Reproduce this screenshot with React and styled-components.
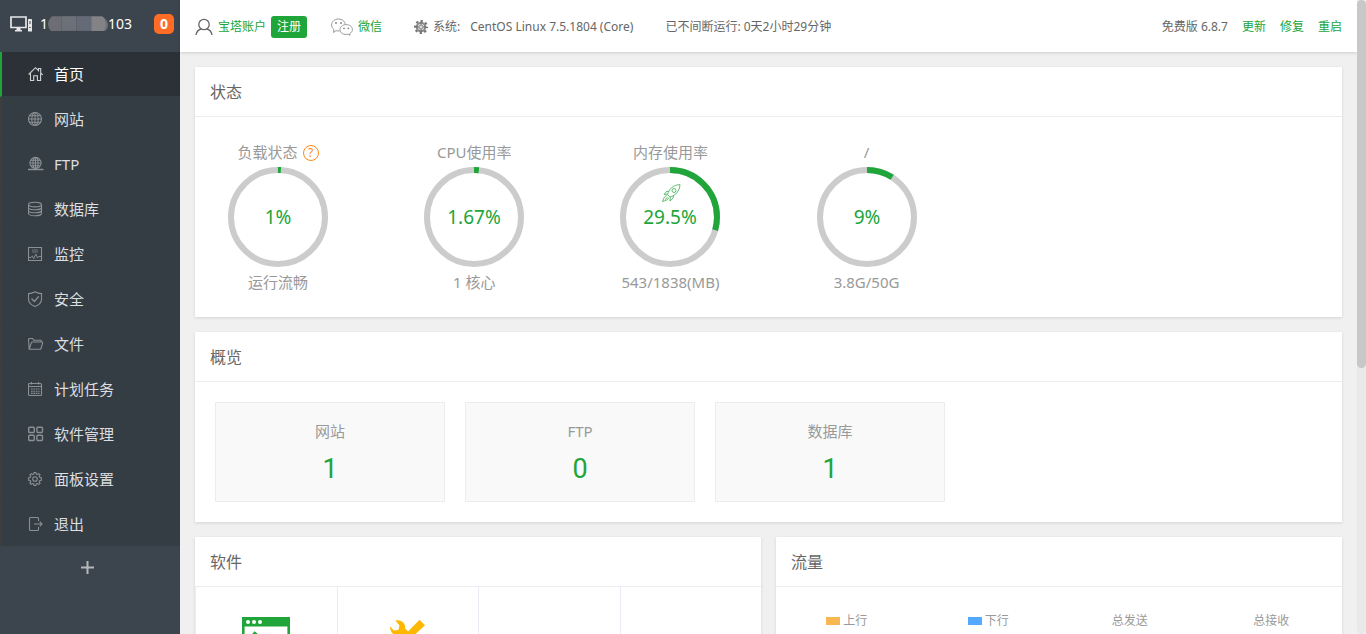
import React from "react";
import styled, { createGlobalStyle } from "styled-components";

const GlobalStyle = createGlobalStyle`
  * {
    box-sizing: border-box;
  }
  body {
    margin: 0;
    background: #f0f0f0;
    color: #666;
    font-family: "Noto Sans", "Noto Sans CJK SC", sans-serif;
    font-size: 12px;
    line-height: 20px;
  }
  a {
    color: #20a53a;
    text-decoration: none;
  }
  button {
    border: 0;
    padding: 0;
    background: none;
    font-family: inherit;
    cursor: pointer;
  }
  h2, h3, p, ul {
    margin: 0;
    padding: 0;
    font-weight: normal;
  }
  svg {
    display: block;
    flex: none;
  }
`;

const Shell = styled.div`
  display: flex;
  height: 100vh;
  overflow: hidden;
`;

const Sidebar = styled.aside`
  flex: none;
  width: 180px;
  background: #3c444d;
`;

const Server = styled.div`
  display: flex;
  align-items: center;
  height: 52px;
  padding: 0 6px 4px 10px;
  color: #fff;
  font-size: 14px;
`;

const Address = styled.div`
  display: flex;
  align-items: center;
  flex: 1;
  margin-left: 8px;
`;

const Badge = styled.button`
  width: 20px;
  height: 20px;
  border-radius: 5px;
  background: #ff6c26;
  color: #fff;
  font-size: 14px;
  font-weight: bold;
  line-height: 20px;
`;

const Menu = styled.ul`
  list-style: none;
  background: #353d44;

  li:last-child a {
    height: 44px;
    border-bottom: 0;
  }
`;

const MenuLink = styled.a`
  display: flex;
  align-items: center;
  gap: 10px;
  height: 45px;
  padding-left: 26px;
  border-left: 2px solid ${props => (props.$active ? "#20a53a" : "#403d3d")};
  border-bottom: 1px solid #353d44;
  background: ${props => (props.$active ? "#2c3138" : "#353d44")};
  background-clip: padding-box;
  color: ${props => (props.$active ? "#fff" : "#dcdee0")};
  font-size: 15px;

  svg {
    color: ${props => (props.$active ? "#d0d2d4" : "#8b9094")};
  }
`;

const AddButton = styled.button`
  display: flex;
  justify-content: center;
  width: 100%;
  padding: 15px 5px 14px 0;
  color: #b4b8bc;
`;

const Main = styled.main`
  flex: 1;
  min-width: 0;
`;

const TopBar = styled.header`
  display: flex;
  align-items: center;
  height: 52px;
  padding: 1px 15px 0;
  background: #fff;
  box-shadow: 0 1px 3px rgba(0, 0, 0, 0.15);
`;

const TopItem = styled.div`
  display: flex;
  align-items: center;
  gap: 5px;
  margin-right: ${props => (props.$wide ? 32 : 24)}px;
  white-space: nowrap;
`;

const SystemName = styled.span`
  margin-left: 5px;
`;

const Register = styled.a`
  padding: 1px 6px;
  border-radius: 3px;
  background: #20a53a;
  color: #fff;
`;

const Actions = styled.div`
  display: flex;
  gap: 14px;
  margin-left: auto;
`;

const Content = styled.div`
  display: flex;
  flex-direction: column;
  gap: 15px;
  padding: 15px;
`;

const Columns = styled.div`
  display: grid;
  grid-template-columns: 1fr 1fr;
  gap: 15px;
`;

const Panel = styled.section`
  min-width: 0;
  background: #fff;
  box-shadow: 0 1px 3px rgba(0, 0, 0, 0.12);
`;

const PanelTitle = styled.h2`
  height: 50px;
  padding-left: 15px;
  border-bottom: 1px solid #ececec;
  font-size: 16px;
  line-height: 50px;
`;

const Gauges = styled.div`
  display: grid;
  grid-template-columns: repeat(6, 1fr);
  margin: 0 -15px;
  padding: 25px 0;
`;

const GaugeBox = styled.div`
  display: flex;
  flex-direction: column;
  align-items: center;
  color: #999;
  font-size: 15px;

  svg text {
    fill: #20a53a;
    font-size: 19px;
    text-anchor: middle;
  }
`;

const GaugeTitle = styled.h3`
  display: flex;
  align-items: center;
  gap: 5px;
  height: 25px;
  padding-bottom: 5px;
  font-size: 15px;
  line-height: 20px;
`;

const GaugeNote = styled.p`
  margin-top: 5px;
`;

const Help = styled.button`
  width: 16px;
  height: 16px;
  margin-top: 2px;
  border: 1px solid #fc8a1c;
  border-radius: 8px;
  color: #fc8a1c;
  font-size: 12px;
  line-height: 14px;
`;

const Cards = styled.div`
  display: flex;
  gap: 20px;
  padding: 20px;
`;

const Card = styled.div`
  width: 230px;
  height: 100px;
  padding-top: 18px;
  border: 1px solid #ececec;
  background: #f9f9f9;
  color: #999;
  font-size: 15px;
  text-align: center;

  a {
    display: block;
    margin-top: 12px;
    font-family: Roboto, sans-serif;
    font-size: 27px;
    line-height: 32px;
  }
`;

const SoftGrid = styled.div`
  display: grid;
  grid-template-columns: repeat(4, 1fr);
`;

const SoftCell = styled.div`
  display: flex;
  justify-content: center;
  height: 141px;
  padding-top: 30px;
  border-left: 1px solid #ebebf8;
  border-bottom: 1px solid #ebebf8;
`;

const Traffic = styled.div`
  display: grid;
  grid-template-columns: repeat(4, 1fr);
  height: 141px;
  padding-top: 24px;
  color: #999;
`;

const TrafficItem = styled.div`
  display: flex;
  align-items: center;
  justify-content: center;
  gap: 3px;
  height: 20px;
`;

const Swatch = styled.span`
  width: 14px;
  height: 8px;
  background: ${props => props.$color};
`;

const ScrollTrack = styled.div`
  flex: none;
  width: 9px;
  border-radius: 5px;
  background: #e9e9e9;
`;

const ScrollThumb = styled.div`
  height: 58%;
  border-radius: 5px;
  background: #c8c8c8;
`;

const MenuIcon = ({ children }) => (
  <svg
    width="16"
    height="16"
    viewBox="0 0 16 16"
    fill="none"
    stroke="currentColor"
    strokeWidth="1.1"
    aria-hidden="true"
  >
    {children}
  </svg>
);

const icons = {
  home: (
    <path d="M.6 8.500 7.500 1.700l3 3V2.500h2.200v4.400l2 1.900M2.500 7.600v6.900h3.200V9.800h3.700v4.700h3.200V7.600" />
  ),
  globe: (
    <>
      <circle cx="7" cy="8" r="6.500" />
      <ellipse cx="7" cy="8" rx="3.200" ry="6.500" />
      <path d="M7 1.500v13M.5 8h13M1.500 4.700h11M1.500 11.300h11" />
    </>
  ),
  ftp: (
    <>
      <circle cx="7.500" cy="7" r="5.600" />
      <ellipse cx="7.500" cy="7" rx="2.600" ry="5.600" />
      <path d="M7.500 1.400v11.200M2 7h11M3 4.200h9M3 9.800h9" />
      <path d="M0 13.500h15.500" strokeWidth="1.500" />
    </>
  ),
  database: (
    <>
      <ellipse cx="7" cy="3.600" rx="6.500" ry="2.300" />
      <path d="M.5 3.600v8.800c0 1.300 2.900 2.300 6.500 2.300s6.500-1 6.500-2.300V3.600M.5 6.500c0 1.300 2.900 2.300 6.500 2.300s6.500-1 6.500-2.300M.5 9.500c0 1.300 2.900 2.300 6.500 2.300s6.500-1 6.500-2.300" />
    </>
  ),
  monitor: (
    <>
      <path d="M.5 1.500h13v13H.5z" />
      <path d="M4 4h6M4 6h6" strokeWidth=".7" />
      <path d="M1 11.500h2l1.300-1.700 1.400 3L7.800 8l1.700 4 1.200-1.500h2.500" strokeWidth=".9" />
    </>
  ),
  shield: (
    <>
      <path d="M7 .8c2 1.200 4.100 1.800 6.500 1.800v5.600c0 3.300-2.600 5.700-6.500 7.300C3.100 13.900.5 11.500.5 8.200V2.600C2.900 2.600 5 2 7 .8z" />
      <path d="m3.500 7.500 2.900 2.900 4.300-5" strokeWidth="1.400" />
    </>
  ),
  folder: (
    <path d="M1.200 13.300.5 3.500q0-1 1-1h3l1.300 1.700h6.700q.8 0 .8.800v1M1.200 13.300h10.900q.7 0 .9-.8l1.600-5.700q.2-.8-.6-.8H4.300q-.7 0-.9.700z" />
  ),
  calendar: (
    <>
      <rect x=".5" y="2.500" width="13" height="12" rx="1" />
      <path d="M.5 5.500h13M3.500 1v2.500M10.500 1v2.500" />
      <path d="M3 8h8.500M3 10.200h8.500M3 12.400h8.500" strokeDasharray="1.700 .7" />
    </>
  ),
  apps: (
    <g strokeWidth="1.400">
      <rect x=".7" y="1.200" width="5.600" height="5.300" rx="1" />
      <rect x="8.900" y="1.200" width="5.600" height="5.300" rx="1" />
      <rect x=".7" y="9.200" width="5.600" height="5.300" rx="1" />
      <rect x="8.900" y="9.200" width="5.600" height="5.300" rx="1" />
    </g>
  ),
  settings: (
    <>
      <path d="m5.700 3 .4-1.500h1.800L8.300 3l1.100.5 1.400-.9 1.300 1.300-.9 1.400.5 1.100 1.600.4v2.400l-1.600.4-.5 1.100.9 1.400-1.300 1.300-1.400-.9-1.100.5-.4 1.500H6.100L5.700 13l-1.100-.5-1.400.9-1.300-1.300.9-1.400-.5-1.100-1.600-.4V6.800l1.600-.4.5-1.100-.9-1.400 1.300-1.300 1.400.9z" />
      <circle cx="7" cy="8" r="2.300" />
    </>
  ),
  exit: (
    <path d="M10.500 5V2.500q0-1-1-1h-7q-1 0-1 1v11q0 1 1 1h7q1 0 1-1V11M6 8h8M11.700 5.700 14 8l-2.300 2.300" />
  )
};

const menu = [
  { icon: "home", label: "首页" },
  { icon: "globe", label: "网站" },
  { icon: "ftp", label: "FTP" },
  { icon: "database", label: "数据库" },
  { icon: "monitor", label: "监控" },
  { icon: "shield", label: "安全" },
  { icon: "folder", label: "文件" },
  { icon: "calendar", label: "计划任务" },
  { icon: "apps", label: "软件管理" },
  { icon: "settings", label: "面板设置" },
  { icon: "exit", label: "退出" }
];

const gauges = [
  { title: "负载状态", value: 1, note: "运行流畅", help: true },
  { title: "CPU使用率", value: 1.67, note: "1 核心" },
  { title: "内存使用率", value: 29.5, note: "543/1838(MB)", rocket: true },
  { title: "/", value: 9, note: "3.8G/50G" }
];

const overview = [
  { title: "网站", count: 1 },
  { title: "FTP", count: 0 },
  { title: "数据库", count: 1 }
];

const traffic = [
  { label: "上行", color: "#f7b851" },
  { label: "下行", color: "#52a9ff" },
  { label: "总发送" },
  { label: "总接收" }
];

const ComputerIcon = () => (
  <svg width="22" height="16" viewBox="0 0 22 16" aria-hidden="true">
    <path
      d="M1 1h15v10.500H1z"
      fill="none"
      stroke="#e6e7e8"
      strokeWidth="1.700"
    />
    <path d="M6.500 12h4v2h-4zM5 14h7v1.500H5z" fill="#e6e7e8" />
    <rect x="18" y="3" width="4" height="12.500" rx=".6" fill="#e6e7e8" />
    <path d="M20 5v3M19.300 11.500h1.400" stroke="#3c444d" />
  </svg>
);

const AddressMask = () => (
  <svg width="60" height="16" viewBox="0 0 61 16" aria-hidden="true">
    <path d="M4 0h10v15H3Q0 12 0 8t4-8z" fill="#6d6e75" />
    <path d="M14 0h15v15H14z" fill="#6b7079" />
    <path d="M29 0h15v15H29z" fill="#656b76" />
    <path d="M44 0h11q4 2 4 8t-2 7H44z" fill="#828287" />
    <path d="M57 2q4 3 4 7t-3 6h-1q3-7 0-13z" fill="#6d727c" />
  </svg>
);

const UserIcon = () => (
  <svg
    width="18"
    height="18"
    viewBox="0 0 18 18"
    fill="none"
    stroke="#666"
    strokeWidth="1.300"
    aria-hidden="true"
  >
    <circle cx="9" cy="6.500" r="5.200" />
    <path d="M1 17c.5-3.200 2.400-5.300 5-6M17 17c-.5-3.200-2.400-5.300-5-6" />
  </svg>
);

const WechatIcon = () => (
  <svg
    width="22"
    height="18"
    viewBox="0 0 22 18"
    fill="none"
    stroke="#999"
    aria-hidden="true"
  >
    <path d="M8.500 12.900c-1.200.2-2.300.1-3.500-.3L2.500 14.500l.4-3C1.300 10.200.6 8.700.6 7 .6 3.500 3.700 1 7.400 1c3.800 0 6.500 2.300 6.900 5.200" />
    <path d="M18.700 15.600 19 17.300l-2-1.200c-4.300 1.200-8-1-8-4.500 0-2.900 2.700-5 6.100-5 3.500 0 6.300 2.100 6.300 5 0 1.600-.9 3-2.700 4z" />
    <g fill="#888" stroke="none">
      <circle cx="5" cy="5" r="1" />
      <circle cx="10" cy="5" r="1" />
      <circle cx="13" cy="10.300" r=".9" />
      <circle cx="17.300" cy="10.300" r=".9" />
    </g>
  </svg>
);

const SystemIcon = () => (
  <svg width="14" height="14" viewBox="0 0 14 14" aria-hidden="true">
    <circle cx="7" cy="7" r="4.200" fill="#ddd" stroke="#888" strokeWidth="2" />
    <circle
      cx="7"
      cy="7"
      r="6"
      fill="none"
      stroke="#777"
      strokeWidth="2"
      strokeDasharray="2.356 2.356"
      strokeDashoffset="1.178"
    />
    <circle cx="7" cy="7" r="2" fill="none" stroke="#888" strokeWidth=".8" />
    <path
      d="M7 1.500v4M7 8.500v4M1.500 7h4M8.500 7h4"
      stroke="#666"
      strokeWidth=".8"
    />
  </svg>
);

const Rocket = () => (
  <g
    transform="translate(42 17)"
    fill="none"
    stroke="#20a53a"
    strokeWidth=".9"
    opacity=".8"
  >
    <path d="M5.500 10.500C7 5 11 1 18 .6 17.700 7 13.500 11.500 8 13.200z" />
    <circle cx="12" cy="6.500" r="2" />
    <path d="M7 7.200 4.500 7.500 2 10.500l3.500-.4M11.400 11.500l-.2 2.400-3.200 3.200.4-3.800M4.800 11.500c-2 .5-3.200 2.600-4.200 6 3.200-.9 5.600-2 6.300-4" />
    <path d="m3 15.500 2.500-2.300" />
  </g>
);

const Gauge = ({ title, value, note, help, rocket }) => (
  <GaugeBox>
    <GaugeTitle>
      {title}
      {help && <Help aria-label="帮助">?</Help>}
    </GaugeTitle>
    <svg width="100" height="100" viewBox="0 0 100 100">
      <circle cx="50" cy="50" r="47" fill="none" stroke="#ccc" strokeWidth="6" />
      <circle
        cx="50"
        cy="50"
        r="47"
        fill="none"
        stroke="#20a53a"
        strokeWidth="6"
        pathLength="100"
        strokeDasharray={`${value} 100`}
        transform="rotate(-90 50 50)"
      />
      {rocket && <Rocket />}
      <text x="50" y="57">
        {value}%
      </text>
    </svg>
    <GaugeNote>{note}</GaugeNote>
  </GaugeBox>
);

const TerminalIcon = () => (
  <svg width="48" height="48" viewBox="0 0 48 48" aria-hidden="true">
    <path
      d="M1.300 1.300h45.400v40H1.300z"
      fill="none"
      stroke="#20a53a"
      strokeWidth="2.600"
    />
    <path d="M0 0h48v9.500H0z" fill="#20a53a" />
    <g fill="#fff">
      <circle cx="6" cy="5" r="2" />
      <circle cx="12" cy="5" r="2" />
      <circle cx="18" cy="5" r="2" />
    </g>
    <path
      d="m11.500 15.500 8 7-8 7M23 31h13"
      fill="none"
      stroke="#20a53a"
      strokeWidth="3.500"
    />
  </svg>
);

const ToolsIcon = () => (
  <svg width="48" height="48" viewBox="0 0 48 48" fill="#ffb800" aria-hidden="true">
    <path d="M11.500 3.600c5-1.300 10.200 2 9.700 8l17 18.500-5 5L15 17.500C9.500 19.200 5.800 15 6.200 9.300l3.600 4.200 4.600-.5 1-4.500z" />
    <path d="m35.500 2.700 5.500 5.500L29 19.500 14 35l-5.500-5.500L24.500 14z" />
  </svg>
);

const App = () => {
  return (
    <Shell>
      <GlobalStyle />
      <Sidebar>
        <Server>
          <ComputerIcon />
          <Address>
            1<AddressMask />
            103
          </Address>
          <Badge>0</Badge>
        </Server>
        <Menu>
          {menu.map((item, index) => (
            <li key={item.icon}>
              <MenuLink href="#" $active={index === 0}>
                <MenuIcon>{icons[item.icon]}</MenuIcon>
                {item.label}
              </MenuLink>
            </li>
          ))}
        </Menu>
        <AddButton aria-label="添加">
          <svg width="13" height="13" viewBox="0 0 13 13">
            <path d="M6.500 0v13M0 6.500h13" stroke="currentColor" strokeWidth="2" />
          </svg>
        </AddButton>
      </Sidebar>
      <Main>
        <TopBar>
          <TopItem>
            <UserIcon />
            <a href="#">宝塔账户</a>
            <Register href="#">注册</Register>
          </TopItem>
          <TopItem $wide>
            <WechatIcon />
            <a href="#">微信</a>
          </TopItem>
          <TopItem $wide>
            <SystemIcon />
            <span>系统:</span>
            <SystemName>CentOS Linux 7.5.1804 (Core)</SystemName>
          </TopItem>
          <TopItem>已不间断运行: 0天2小时29分钟</TopItem>
          <Actions>
            <span>免费版 6.8.7</span>
            <a href="#">更新</a>
            <a href="#">修复</a>
            <a href="#">重启</a>
          </Actions>
        </TopBar>
        <Content>
          <Panel>
            <PanelTitle>状态</PanelTitle>
            <Gauges>
              {gauges.map(gauge => (
                <Gauge key={gauge.title} {...gauge} />
              ))}
            </Gauges>
          </Panel>
          <Panel>
            <PanelTitle>概览</PanelTitle>
            <Cards>
              {overview.map(item => (
                <Card key={item.title}>
                  <p>{item.title}</p>
                  <a href="#">{item.count}</a>
                </Card>
              ))}
            </Cards>
          </Panel>
          <Columns>
            <Panel>
              <PanelTitle>软件</PanelTitle>
              <SoftGrid>
                <SoftCell>
                  <TerminalIcon />
                </SoftCell>
                <SoftCell>
                  <ToolsIcon />
                </SoftCell>
                <SoftCell />
                <SoftCell />
              </SoftGrid>
            </Panel>
            <Panel>
              <PanelTitle>流量</PanelTitle>
              <Traffic>
                {traffic.map(item => (
                  <TrafficItem key={item.label}>
                    {item.color && <Swatch $color={item.color} />}
                    {item.label}
                  </TrafficItem>
                ))}
              </Traffic>
            </Panel>
          </Columns>
        </Content>
      </Main>
      <ScrollTrack>
        <ScrollThumb />
      </ScrollTrack>
    </Shell>
  );
};

export default App;
